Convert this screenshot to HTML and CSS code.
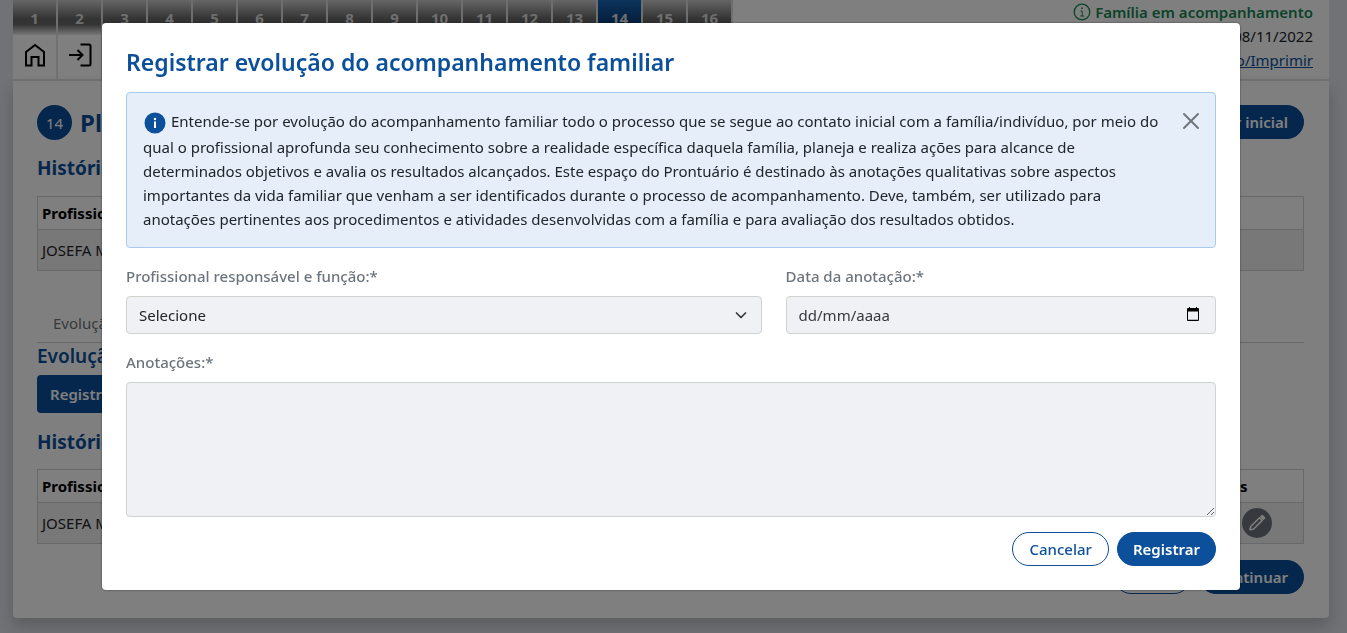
FILE: index.html
```html
<!DOCTYPE html>
<html lang="pt-BR">
<head>
<meta charset="utf-8">
<meta name="viewport" content="width=device-width, initial-scale=1">
<title>Registrar evolução do acompanhamento familiar</title>
<link rel="stylesheet" href="styles.css">
</head>
<body>
<div class="page">
  <header class="header">
    <nav class="nav">
      <div class="steps">
        <a class="step" href="#1">1</a><a class="step" href="#2">2</a><a class="step" href="#3">3</a><a class="step" href="#4">4</a><a class="step" href="#5">5</a><a class="step" href="#6">6</a><a class="step" href="#7">7</a><a class="step" href="#8">8</a><a class="step" href="#9">9</a><a class="step" href="#10">10</a><a class="step" href="#11">11</a><a class="step" href="#12">12</a><a class="step" href="#13">13</a><a class="step step-active" href="#14">14</a><a class="step" href="#15">15</a><a class="step" href="#16">16</a>
      </div>
      <div class="tools">
        <a class="tool" href="#home" aria-label="Início">
          <svg width="22" height="24" viewBox="0 0 22 24" fill="none" stroke="#000" stroke-width="2"><path d="M2 22.500V9L11 2l9 7v13.500h-5.500V14h-7v8.500z"/></svg>
        </a>
        <a class="tool" href="#entrar" aria-label="Entrar">
          <svg width="24" height="24" viewBox="0 0 24 24" fill="none" stroke="#000" stroke-width="2"><path d="M1 12h13M9.500 7l5 5-5 5M12.500 1.500H21q1.500 0 1.500 1.500v18q0 1.500-1.500 1.500h-8.500"/></svg>
        </a>
      </div>
    </nav>
    <div class="status">
      <div class="status-family"><svg width="18" height="18" viewBox="0 0 18 18" fill="none" stroke="#198754"><circle cx="9" cy="9" r="7.800" stroke-width="1.300"/><path d="M7.500 8h1.700v5M7.300 13h3.700" stroke-width="1"/><circle cx="9" cy="5.200" r=".5" fill="#198754"/></svg>Família em acompanhamento</div>
      <div>08/11/2022</div>
      <a class="link" href="#imprimir">Visualizar Prontuário/Imprimir</a>
    </div>
  </header>

  <main class="card">
    <div class="title-row">
      <span class="badge">14</span>
      <h1 class="title">Plano</h1>
      <button class="pill pill-solid push" type="button">Registrar inicial</button>
    </div>
    <h2 class="section">Histórico</h2>
    <table class="table">
      <thead><tr><th>Profissional</th></tr></thead>
      <tbody><tr><td>JOSEFA MARIA</td></tr></tbody>
    </table>
    <div class="tabs"><a class="tab" href="#evolucao">Evolução</a></div>
    <h2 class="section section-tight">Evolução</h2>
    <button class="add" type="button">Registrar</button>
    <h2 class="section section-last">Histórico</h2>
    <table class="table">
      <thead><tr><th>Profissional</th><th class="actions">Ações</th></tr></thead>
      <tbody><tr><td>JOSEFA MARIA</td><td class="actions"><div class="action-list">
        <button class="round" type="button" aria-label="Visualizar"></button>
        <button class="round" type="button" aria-label="Editar"><svg width="18" height="18" viewBox="0 0 18 18" fill="none" stroke="#fff" stroke-width="1.500"><path d="M2 15.700l.7-3.200 8.800-8.800 2.700 2.700-8.800 8.800z" stroke-linejoin="round"/><path d="M13 2.700l1.200-1.200 2.400 2.400-1.200 1.200z" fill="#fff"/></svg></button>
      </div></td></tr></tbody>
    </table>
    <div class="footer-row">
      <button class="pill pill-outline" type="button">Voltar</button>
      <button class="pill pill-solid" type="button">Continuar</button>
    </div>
  </main>
</div>

<div class="backdrop">
  <form class="modal" role="dialog" aria-modal="true" aria-labelledby="modal-title">
    <h2 class="modal-title" id="modal-title">Registrar evolução do acompanhamento familiar</h2>
    <div class="alert">
      <p class="alert-text"><svg class="info" width="22" height="22" viewBox="0 0 22 22"><circle cx="11" cy="11" r="10.500" fill="#0c4f9b"/><circle cx="11" cy="7" r="1.200" fill="#fff"/><path d="M10 9.500h2V16h-2z" fill="#fff"/></svg>Entende-se por evolução do acompanhamento familiar todo o processo que se segue ao contato inicial com a família/indivíduo, por meio do qual o profissional aprofunda seu conhecimento sobre a realidade específica daquela família, planeja e realiza ações para alcance de determinados objetivos e avalia os resultados alcançados. Este espaço do Prontuário é destinado às anotações qualitativas sobre aspectos importantes da vida familiar que venham a ser identificados durante o processo de acompanhamento. Deve, também, ser utilizado para anotações pertinentes aos procedimentos e atividades desenvolvidas com a família e para avaliação dos resultados obtidos.</p>
      <button class="close" type="button" aria-label="Fechar"><svg width="18" height="18" viewBox="0 0 18 18" stroke="#71767c" stroke-width="2" stroke-linecap="round"><path d="M2 2l14 14M16 2L2 16"/></svg></button>
    </div>
    <div class="fields">
      <div class="field">
        <label class="label" for="prof">Profissional responsável e função:*</label>
        <div class="control">
          <select class="input" id="prof"><option>Selecione</option></select>
          <svg class="control-icon" width="16" height="16" viewBox="0 0 16 16" fill="none" stroke="#343a40" stroke-width="1.700" stroke-linecap="round" stroke-linejoin="round"><path d="M3.500 6L8 10.500 12.500 6"/></svg>
        </div>
      </div>
      <div class="field">
        <label class="label" for="data">Data da anotação:*</label>
        <div class="control">
          <input class="input" id="data" type="text" placeholder="dd/mm/aaaa">
          <svg class="control-icon control-icon-date" width="14" height="14" viewBox="0 0 14 14"><path fill-rule="evenodd" d="M2 1h1V0h1v1h6V0h1v1h1q1 0 1 1v11q0 1-1 1H2q-1 0-1-1V2q0-1 1-1zM2 4.500v8.300h10V4.500z" fill="#000"/></svg>
        </div>
      </div>
    </div>
    <div class="field">
      <label class="label" for="notas">Anotações:*</label>
      <textarea class="input area" id="notas"></textarea>
    </div>
    <div class="modal-actions">
      <button class="pill pill-outline" type="button">Cancelar</button>
      <button class="pill pill-solid" type="submit">Registrar</button>
    </div>
  </form>
</div>
</body>
</html>
```
FILE: styles.css
```css
* { box-sizing: border-box; }
body {
  margin: 0;
  background: #e2e4ea;
  color: #212529;
  font: 15px/24px "Noto Sans", "Open Sans", sans-serif;
  overflow: hidden;
}
button, input, select, textarea { font: inherit; color: inherit; }
h1, h2, p { margin: 0; }
.page { padding: 0 18px 15px 13px; }

.header {
  display: flex;
  justify-content: space-between;
  height: 80px;
  background: #fff;
  border-bottom: 1px solid #e2e2e2;
}
.steps, .tools { display: flex; }
.step {
  width: 45px;
  height: 35px;
  padding-top: 6px;
  border-right: 2px solid #ddd;
  background: linear-gradient(#ccc, #666 55%, #6a6a6a 70%, #eee);
  color: #ddd;
  font-weight: 700;
  text-align: center;
  text-decoration: none;
}
.step-active { background: linear-gradient(#1967b8, #0a3f80 60%, #0c4a91); }
.tool {
  display: flex;
  align-items: center;
  justify-content: center;
  width: 45px;
  height: 44px;
  padding-bottom: 4px;
  border-right: 2px solid #e2e2e2;
}
.status { padding-right: 16px; text-align: right; }
.status-family {
  display: flex;
  align-items: center;
  gap: 4px;
  color: #198754;
  font-weight: 600;
}
.link { color: #0c4f9b; }

.card {
  margin-top: 1px;
  padding: 24px 25px 24px 24px;
  background: #fff;
  border-radius: 0 0 4px 4px;
  box-shadow: 0 8px 16px rgba(0, 0, 0, .2);
}
.title-row { display: flex; align-items: flex-start; gap: 8px; height: 35px; }
.badge {
  width: 35px;
  height: 35px;
  border-radius: 50%;
  background: #0c4f9b;
  color: #fff;
  line-height: 36px;
  text-align: center;
}
.title { color: #0c4f9b; font-size: 24px; line-height: 36px; font-weight: 700; }
.push { margin-left: auto; }
.section { margin: 16px 0; color: #0c4f9b; font-size: 19px; line-height: 24px; font-weight: 700; }
.section-tight { margin: 1px 0 7px; font-weight: 600; }
.section-last { margin: 17px 0 15px; }
.table { width: 100%; border-collapse: collapse; }
.table th, .table td { padding: 4px; border: 1px solid #ced0d4; border-width: 1px 0; text-align: left; }
.table th { height: 33px; color: #000; font-weight: 700; }
.table td { height: 41px; background: #f0f0f0; }
.table tr > :first-child { border-left-width: 1px; }
.table tr > :last-child { border-right-width: 1px; }
.table .actions { width: 104px; }
.action-list { display: flex; gap: 8px; }
.round {
  display: flex;
  align-items: center;
  justify-content: center;
  width: 30px;
  height: 30px;
  padding: 0;
  border: 0;
  border-radius: 50%;
  background: #6c757d;
}
.tabs { display: flex; margin-top: 32px; padding: 8px 16px 7px; border-bottom: 1px solid #ced0d4; }
.tab { color: #6c757d; text-decoration: none; }
.add {
  display: block;
  height: 38px;
  padding: 0 13px;
  border: 0;
  border-radius: 4px;
  background: #0c4f9b;
  color: #fff;
  font-weight: 600;
}
.footer-row { display: flex; justify-content: flex-end; gap: 8px; margin-top: 16px; }

.pill {
  height: 34px;
  padding: 0 16px;
  border: 1px solid #0c4f9b;
  border-radius: 17px;
  font-weight: 500;
}
.pill-solid { padding: 0 15px; background: #0c4f9b; color: #fff; font-weight: 600; }
.pill-outline { background: #fff; color: #0c4f9b; }

.backdrop {
  position: fixed;
  inset: 0;
  padding: 23px 5px 23px 0;
  background: rgba(0, 0, 0, .5);
}
.modal {
  width: 100%;
  max-width: 1138px;
  margin: 0 auto;
  padding: 24px;
  background: #fff;
  border-radius: 4px;
  box-shadow: 0 0 2px rgba(0, 0, 0, .6);
}
.modal-title { color: #0c4f9b; font-size: 23px; line-height: 30px; font-weight: 600; }
.alert {
  display: flex;
  align-items: flex-start;
  margin: 15px 0 16px;
  padding: 16px 14px 16px 16px;
  background: #e6eef9;
  border: 1px solid #a9c9f0;
  border-radius: 4px;
}
.alert-text { flex: 1; }
.info { margin: 0 5px 1px 1px; vertical-align: -8px; }
.close {
  display: flex;
  margin: 2px 0 0 12px;
  padding: 1px;
  border: 0;
  background: none;
}
.fields { display: grid; grid-template-columns: 635fr 430fr; gap: 24px; margin-bottom: 16px; }
.label { display: block; margin-bottom: 8px; color: #6c757d; font-weight: 500; }
.control { position: relative; }
.input {
  display: block;
  width: 100%;
  height: 38px;
  padding: 0 12px;
  border: 1px solid #ced4d0;
  border-radius: 4px;
  background: #f0f1f4;
  appearance: none;
}
.input::placeholder { color: #343a40; opacity: 1; }
.control-icon { position: absolute; right: 13px; top: 11px; pointer-events: none; }
.control-icon-date { right: 16px; }
.area { height: 135px; resize: vertical; }
.modal-actions { display: flex; justify-content: flex-end; gap: 8px; margin-top: 15px; }
```
